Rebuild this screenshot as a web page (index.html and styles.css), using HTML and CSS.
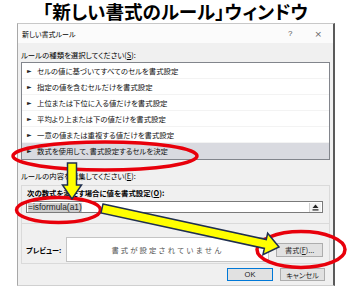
FILE: index.html
```html
<!DOCTYPE html>
<html lang="ja">
<head>
<meta charset="utf-8">
<link rel="stylesheet" href="styles.css">
</head>
<body>
<h1 class="heading">「新しい書式のルール」ウィンドウ</h1>
<div class="dialog">
  <div class="titlebar">
    <span class="wtitle">新しい書式ルール</span>
    <span class="wbtns"><span class="help">?</span><span class="close">×</span></span>
  </div>
  <div class="dbody">
    <div class="label">ルールの種類を選択してください(<u>S</u>):</div>
    <ul class="list">
      <li><span class="tri">►</span>セルの値に基づいてすべてのセルを書式設定</li>
      <li><span class="tri">►</span>指定の値を含むセルだけを書式設定</li>
      <li><span class="tri">►</span>上位または下位に入る値だけを書式設定</li>
      <li><span class="tri">►</span>平均より上または下の値だけを書式設定</li>
      <li><span class="tri">►</span>一意の値または重複する値だけを書式設定</li>
      <li class="sel"><span class="tri">►</span>数式を使用して、書式設定するセルを決定</li>
    </ul>
    <div class="label label2">ルールの内容を編集してください(<u>E</u>):</div>
    <div class="group">
      <div class="blabel">次の数式を満たす場合に値を書式設定(<u>O</u>):</div>
      <div class="input">
        <span class="formula">=isformula(a1)</span>
        <span class="collapse"><svg width="7" height="7" viewBox="0 0 7 7"><path d="M3.5 0.5 L6.5 4 L0.5 4 Z" fill="#222"/><rect x="0.5" y="5.3" width="6" height="1.2" fill="#222"/></svg></span>
      </div>
      <div class="sep"></div>
      <div class="preview">
        <span class="plabel">プレビュー:</span>
        <div class="pbox">書式が設定されていません</div>
        <button class="btn fmt">書式(<u>F</u>)...</button>
      </div>
    </div>
    <div class="actions">
      <button class="btn ok">OK</button>
      <button class="btn cancel">キャンセル</button>
    </div>
  </div>
</div>
<svg class="marks" width="351" height="293" viewBox="0 0 351 293">
  <ellipse cx="105" cy="156" rx="92" ry="14" fill="none" stroke="#e8000b" stroke-width="3.5"/>
  <ellipse cx="58.5" cy="210" rx="42" ry="12.5" fill="none" stroke="#e8000b" stroke-width="3.5"/>
  <ellipse cx="301" cy="249.5" rx="44" ry="18" fill="none" stroke="#e8000b" stroke-width="3.5"/>
  <polygon points="67.5,163 76.5,163 76.5,185 81.5,185 72,199 62.5,185 67.5,185" fill="#ffff00" stroke="#1f2f4f" stroke-width="1.5" stroke-linejoin="miter"/>
  <polygon points="102.96,204.1 266.26,239.6 267.64,233.25 279,247 262.96,254.75 264.34,248.4 101.04,212.9" fill="#ffff00" stroke="#1f2f4f" stroke-width="1.5"/>
</svg>
</body>
</html>
```
FILE: styles.css
```css
html, body {
  margin: 0;
  padding: 0;
  background: #fff;
}
body {
  position: relative;
  width: 351px;
  height: 293px;
  overflow: hidden;
  font-family: "Noto Sans CJK JP", "Noto Sans", sans-serif;
  font-feature-settings: "palt";
  color: #000;
}
.heading {
  margin: 0;
  height: 22px;
  line-height: 22px;
  font-size: 18.6px;
  font-weight: bold;
  text-align: center;
  white-space: nowrap;
}
.dialog {
  margin: 1px 0 0 17px;
  width: 315px;
  border-left: 1px solid #a8a8a8;
  border-top: 1px solid #c8c8c8;
  border-right: 2px solid #5a5a5a;
  border-bottom: 1px solid #d0d0d0;
  background: #f0f0f0;
}
.titlebar {
  height: 19px;
  background: #fbfbfb;
  display: flex;
  align-items: center;
  justify-content: space-between;
  padding-left: 4px;
  font-size: 7px;
}
.wbtns {
  display: flex;
  align-items: center;
  color: #555;
}
.help {
  font-family: "Liberation Sans", sans-serif;
  font-size: 8px;
  margin-right: 22px;
}
.close {
  font-family: "DejaVu Sans", sans-serif;
  font-size: 9px;
  margin-right: 11px;
  color: #666;
}
.dbody {
  padding: 6px 3px 4px 3px;
}
.label {
  height: 12px;
  line-height: 12px;
  font-size: 7.4px;
}
u { text-decoration: underline; }
.list {
  list-style: none;
  margin: 1px 0 0 0;
  padding: 0;
  border: 1px solid #82858c;
  background: #fff;
}
.list li {
  height: 15px;
  line-height: 15px;
  border-bottom: 1px solid #f3f3f3;
  font-size: 7.4px;
  color: #111;
  padding-left: 5px;
  display: flex;
  align-items: center;
}
.list li:last-child { border-bottom: 1px solid #d9dae0; }
.list li.sel { background: #d9dae0; }
.tri {
  font-family: "DejaVu Sans", sans-serif;
  font-size: 6px;
  width: 10px;
  color: #222;
}
.label2 { margin-top: 10px; }
.group {
  margin-top: 3px;
  border: 1px solid #dadada;
  padding: 1px 6px 1px 4px;
}
.blabel {
  height: 12px;
  line-height: 12px;
  font-size: 7.4px;
  font-weight: bold;
  padding-left: 1px;
}
.input {
  margin-top: 2px;
  height: 10px;
  border: 1px solid #7a7a7a;
  background: #fff;
  display: flex;
  align-items: center;
  justify-content: space-between;
  padding: 0 1px;
}
.formula {
  font-family: "Liberation Sans", sans-serif;
  font-size: 8.4px;
  line-height: 9px;
  background: #cdcdcd;
  color: #222;
}
.collapse {
  width: 11px;
  height: 9px;
  background: #f3f3f3;
  border-left: 1px solid #d0d0d0;
  display: flex;
  align-items: center;
  justify-content: center;
}
.collapse svg { display: block; }
.sep {
  margin: 10px -6px 0 -4px;
  border-top: 1px solid #dadada;
}
.preview {
  margin-top: 13px;
  display: flex;
  align-items: center;
}
.plabel {
  width: 40px;
  font-size: 7.2px;
  font-weight: bold;
}
.pbox {
  width: 202px;
  height: 23px;
  border: 1px solid #c4c4c4;
  background: #fff;
  display: flex;
  align-items: center;
  justify-content: center;
  font-size: 7.4px;
  letter-spacing: 2px;
  font-feature-settings: normal;
  color: #555;
}
.btn {
  font-family: "Noto Sans CJK JP", sans-serif;
  font-feature-settings: "palt";
  font-size: 7.2px;
  color: #222;
  background: #e1e1e1;
  border: 1px solid #adadad;
  padding: 0;
  margin: 0;
  display: flex;
  align-items: center;
  justify-content: center;
}
.fmt {
  margin-left: 7px;
  width: 47px;
  height: 14px;
}
.actions {
  display: flex;
  justify-content: flex-end;
  gap: 7px;
  margin-top: 4px;
  padding-right: 5px;
}
.ok {
  width: 46px;
  height: 13px;
  border-color: #0078d7;
  font-family: "Liberation Sans", sans-serif;
  font-size: 7.5px;
}
.cancel {
  width: 45px;
  height: 13px;
}
.marks {
  position: absolute;
  left: 0;
  top: 0;
  pointer-events: none;
}
```
